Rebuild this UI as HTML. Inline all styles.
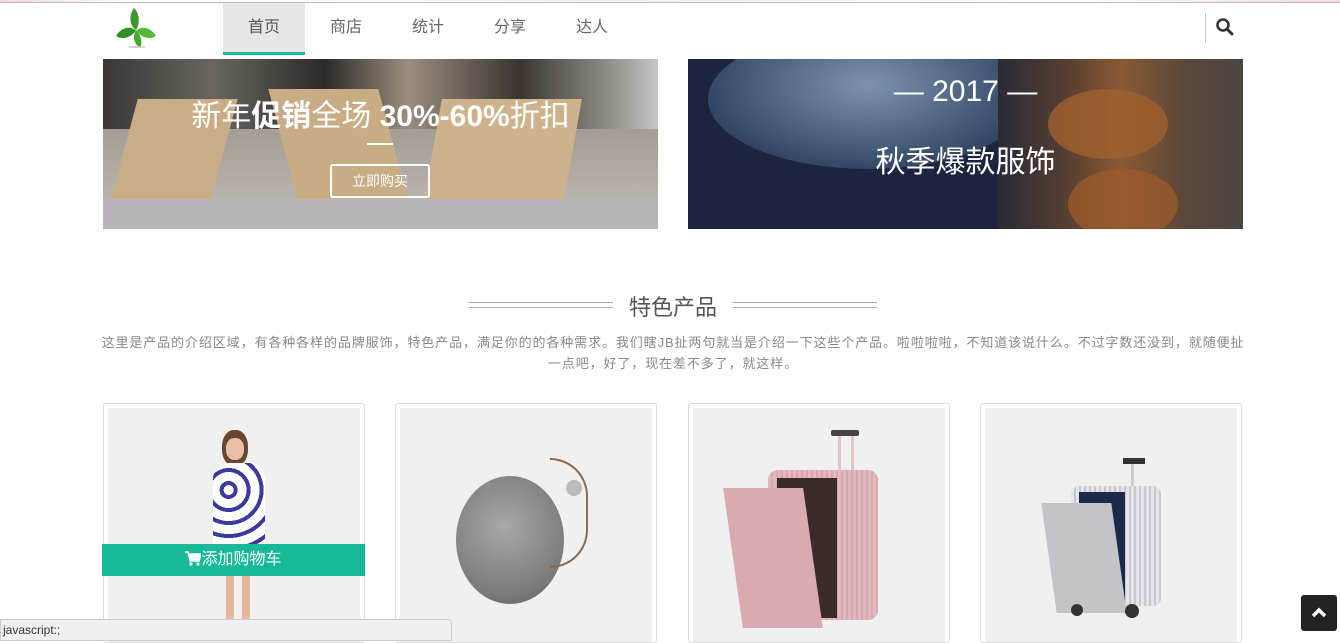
<!DOCTYPE html>
<html><head><meta charset="utf-8"><style>
*{margin:0;padding:0;box-sizing:border-box}
body{width:1340px;height:639px;overflow:hidden;background:#fff;font-family:"Liberation Sans","Noto Sans CJK SC",sans-serif;position:relative}
.abs{position:absolute}
.nav a{position:absolute;top:3px;height:52px;width:82px;text-align:center;line-height:50px;font-size:16px;color:#666;text-decoration:none}
.card{position:absolute;top:403px;width:262px;height:240px;border:1px solid #ddd;border-radius:3px;background:#fff}
.card .im{position:absolute;left:4px;top:4px;right:4px;bottom:0;background:#f0f0f0;overflow:hidden}
</style></head><body>
<div class="abs" style="left:0;top:0;width:1340px;height:3px;background:linear-gradient(90deg,#f2d6dc,#fff 10%,#f5f0f0 50%,#fff 80%,#f2dada)"></div>
<div class="abs" style="left:0;top:2px;width:1340px;height:1px;background:#bbb"></div>
<svg class="abs" style="left:110px;top:6px" width="52" height="44" viewBox="0 0 52 44">
<path d="M24 2 C18 10 20 20 26 24 C30 18 30 8 24 2Z" fill="#3a9a2a"/>
<path d="M6 30 C12 20 22 20 26 25 C20 32 12 34 6 30Z" fill="#2f8f24"/>
<path d="M46 30 C40 20 30 20 26 25 C32 32 40 34 46 30Z" fill="#56b83a"/>
<path d="M26 25 C22 30 24 38 30 42 C33 36 31 29 26 25Z" fill="#4aa833"/>
<ellipse cx="27" cy="41" rx="9" ry="1" fill="#ccc"/>
</svg>
<div class="nav">
<a style="left:223px;background:#e7e7e7;color:#555;border-bottom:3px solid #18b89a">首页</a>
<a style="left:305px">商店</a>
<a style="left:387px">统计</a>
<a style="left:469px">分享</a>
<a style="left:551px">达人</a>
</div>
<div class="abs" style="left:1205px;top:13px;width:1px;height:30px;background:#ccc"></div>
<svg class="abs" style="left:1215px;top:17px" width="20" height="20" viewBox="0 0 20 20"><circle cx="8" cy="8" r="5.5" fill="none" stroke="#333" stroke-width="2.6"/><path d="M12 12 L17 17" stroke="#333" stroke-width="3" stroke-linecap="round"/></svg>
<div class="abs" style="left:103px;top:59px;width:555px;height:170px;overflow:hidden;background:linear-gradient(180deg,#8c8680 0%,#a8a29a 50%,#c0bcb8 100%)">
<div class="abs" style="left:0;top:0;width:555px;height:70px;background:linear-gradient(90deg,#3a3836,#6a655f 20%,#2c2a28 40%,#9a8e7e 55%,#3a3530 75%,#8a8680 90%,#c8c6c4)"></div>
<div class="abs" style="left:20px;top:40px;width:100px;height:110px;background:#c9ad86;transform:skewX(-15deg)"></div>
<div class="abs" style="left:180px;top:30px;width:110px;height:110px;background:#c8ac84;transform:skewX(15deg)"></div>
<div class="abs" style="left:330px;top:40px;width:140px;height:100px;background:#cdb28c;transform:skewX(-10deg)"></div>
<div class="abs" style="left:0;top:140px;width:555px;height:30px;background:#b8b6b8"></div>
<div class="abs" style="left:0;top:32px;width:555px;text-align:center;color:#fff;font-size:30px">新年<b>促销</b>全场 <b>30%-60%</b>折扣</div>
<div class="abs" style="left:264px;top:84px;width:26px;height:2px;background:#fff"></div>
<div class="abs" style="left:227px;top:105px;width:100px;height:34px;border:2px solid #fff;border-radius:3px;color:#fff;font-size:14px;text-align:center;line-height:30px">立即购买</div>
</div>
<div class="abs" style="left:688px;top:59px;width:555px;height:170px;overflow:hidden;background:#1d2440">
<div class="abs" style="left:20px;top:-30px;width:320px;height:140px;border-radius:50%;background:radial-gradient(ellipse at 50% 40%,#7c93ad,#3c5472 60%,#1d2440)"></div>
<div class="abs" style="left:310px;top:0;width:245px;height:170px;background:linear-gradient(90deg,#2a2a36,#5a4030 30%,#8a5a34 50%,#5a4838 75%,#4a4440)"></div>
<div class="abs" style="left:360px;top:30px;width:120px;height:70px;border-radius:50%;background:#a0602e;opacity:.8"></div>
<div class="abs" style="left:380px;top:110px;width:110px;height:70px;border-radius:50%;background:#9a5a2c;opacity:.8"></div>
<div class="abs" style="left:0;top:16px;width:555px;text-align:center;color:#fff;font-size:30px">— 2017 —</div>
<div class="abs" style="left:0;top:78px;width:555px;text-align:center;color:#fff;font-size:30px">秋季爆款服饰</div>
</div>
<div class="abs" style="left:469px;top:302px;width:144px;height:6px;border-top:1px solid #aaa;border-bottom:1px solid #aaa"></div>
<div class="abs" style="left:733px;top:302px;width:144px;height:6px;border-top:1px solid #aaa;border-bottom:1px solid #aaa"></div>
<div class="abs" style="left:613px;top:290px;width:120px;text-align:center;font-size:22px;color:#555">特色产品</div>
<div class="abs" style="left:100px;top:332px;width:1146px;text-align:center;font-size:13px;letter-spacing:0.9px;line-height:21px;color:#888">这里是产品的介绍区域，有各种各样的品牌服饰，特色产品，满足你的的各种需求。我们瞎JB扯两句就当是介绍一下这些个产品。啦啦啦啦，不知道该说什么。不过字数还没到，就随便扯一点吧，好了，现在差不多了，就这样。</div>
<div class="card" style="left:103px"><div class="im">
<div class="abs" style="left:114px;top:22px;width:26px;height:36px;border-radius:45%;background:#6a4530"></div>
<div class="abs" style="left:118px;top:30px;width:18px;height:22px;border-radius:45%;background:#e8c0a8"></div>
<div class="abs" style="left:105px;top:55px;width:52px;height:90px;border-radius:16px 16px 4px 4px;background:repeating-radial-gradient(circle at 30% 30%,#fff 0 5px,#3a3aa0 5px 9px,#fff 9px 13px)"></div>
<div class="abs" style="left:118px;top:150px;width:8px;height:70px;background:#e4b89a"></div>
<div class="abs" style="left:134px;top:150px;width:8px;height:70px;background:#e4b89a"></div>
</div></div>
<div class="abs" style="left:102px;top:544px;width:263px;height:32px;background:#18b99a;color:#fff;font-size:16px;text-align:center;line-height:32px"><svg width="16" height="15" viewBox="0 0 16 15" style="vertical-align:-2px"><path d="M0 1 H3 L5 10 H14 L16 3 H4" fill="#fff" stroke="#fff" stroke-width="1.5"/><circle cx="6" cy="13" r="1.6" fill="#fff"/><circle cx="13" cy="13" r="1.6" fill="#fff"/></svg>添加购物车</div>
<div class="card" style="left:395px"><div class="im">
<div class="abs" style="left:56px;top:68px;width:108px;height:128px;border-radius:50%;background:radial-gradient(circle at 45% 40%,#a8a8a8,#7a7a7a 70%,#5a5a5a)"></div>
<div class="abs" style="left:150px;top:50px;width:38px;height:110px;border:2px solid #8a6a50;border-left:none;border-radius:0 40px 40px 0"></div>
<div class="abs" style="left:166px;top:72px;width:16px;height:16px;border-radius:50%;background:#bbb"></div>
</div></div>
<div class="card" style="left:688px"><div class="im">
<div class="abs" style="left:138px;top:22px;width:28px;height:6px;background:#444;border-radius:2px"></div>
<div class="abs" style="left:145px;top:28px;width:3px;height:36px;background:#e4c4c8"></div>
<div class="abs" style="left:158px;top:28px;width:3px;height:36px;background:#e4c4c8"></div>
<div class="abs" style="left:75px;top:62px;width:110px;height:150px;border-radius:10px;background:repeating-linear-gradient(90deg,#e2b8be 0 3px,#d6a8b0 3px 5px)"></div>
<div class="abs" style="left:84px;top:70px;width:60px;height:140px;background:#3a2a28"></div>
<div class="abs" style="left:40px;top:80px;width:80px;height:140px;background:#d9aab0;transform:skewX(8deg)"></div>
</div></div>
<div class="card" style="left:980px"><div class="im">
<div class="abs" style="left:138px;top:50px;width:22px;height:6px;background:#333"></div>
<div class="abs" style="left:146px;top:56px;width:3px;height:22px;background:#ccc"></div>
<div class="abs" style="left:86px;top:78px;width:90px;height:120px;border-radius:8px;background:repeating-linear-gradient(90deg,#e4e4ea 0 3px,#c8c8d0 3px 5px)"></div>
<div class="abs" style="left:94px;top:84px;width:46px;height:110px;background:#1a2a48"></div>
<div class="abs" style="left:64px;top:95px;width:70px;height:110px;background:#c4c4c8;transform:skewX(8deg)"></div>
<div class="abs" style="left:140px;top:196px;width:14px;height:14px;border-radius:50%;background:#333"></div>
<div class="abs" style="left:86px;top:196px;width:12px;height:12px;border-radius:50%;background:#333"></div>
</div></div>
<div class="abs" style="left:0;top:619px;width:452px;height:22px;background:#f0f0f0;border:1px solid #ccc;border-radius:0 4px 0 0;font-size:12px;color:#333;line-height:20px;padding-left:2px">javascript:;</div>
<div class="abs" style="left:1301px;top:595px;width:36px;height:36px;background:#222;border-radius:3px"></div>
<svg class="abs" style="left:1310px;top:604px" width="18" height="18" viewBox="0 0 18 18"><path d="M3 12 L9 6 L15 12" fill="none" stroke="#fff" stroke-width="3.5"/></svg>
</body></html>
